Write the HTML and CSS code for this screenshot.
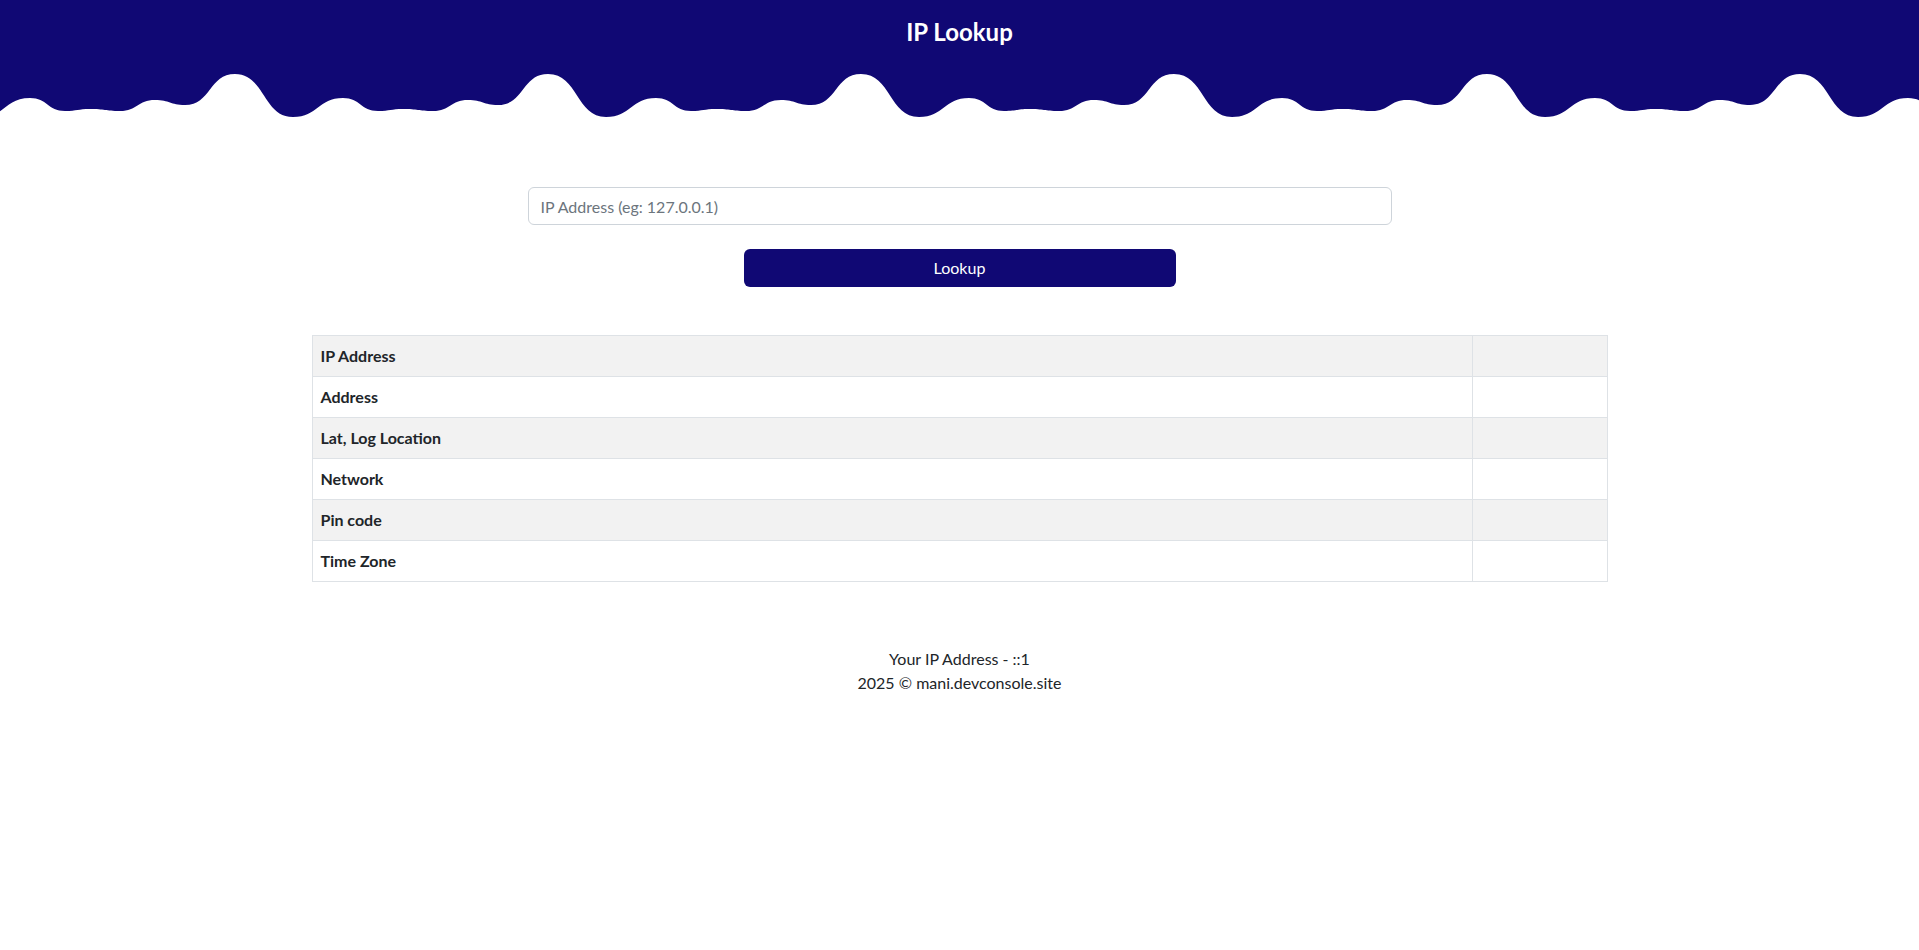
FILE: index.html
```html
<!DOCTYPE html>
<html lang="en">
<head>
<meta charset="utf-8">
<title>IP Lookup</title>
<link rel="stylesheet" href="styles.css">
</head>
<body>
<header class="site-header">
  <div class="header-bar">
    <h1 class="title">IP Lookup</h1>
  </div>
  <svg class="wave" width="100%" height="60" xmlns="http://www.w3.org/2000/svg" aria-hidden="true">
    <path fill="#100874" d="M-20,57 c25,0 25,-19 50,-19 c17.5,0 17.5,13 35,13 c12.5,0 12.5,-2 25,-2 c15,0 15,2 30,2 c17.5,0 17.5,-11 35,-11 c15,0 15,5 30,5 c26,0 24,-31 50,-31 c30,0 28,43 58,43
    c25,0 25,-19 50,-19 c17.5,0 17.5,13 35,13 c12.5,0 12.5,-2 25,-2 c15,0 15,2 30,2 c17.5,0 17.5,-11 35,-11 c15,0 15,5 30,5 c26,0 24,-31 50,-31 c30,0 28,43 58,43
    c25,0 25,-19 50,-19 c17.5,0 17.5,13 35,13 c12.5,0 12.5,-2 25,-2 c15,0 15,2 30,2 c17.5,0 17.5,-11 35,-11 c15,0 15,5 30,5 c26,0 24,-31 50,-31 c30,0 28,43 58,43
    c25,0 25,-19 50,-19 c17.5,0 17.5,13 35,13 c12.5,0 12.5,-2 25,-2 c15,0 15,2 30,2 c17.5,0 17.5,-11 35,-11 c15,0 15,5 30,5 c26,0 24,-31 50,-31 c30,0 28,43 58,43
    c25,0 25,-19 50,-19 c17.5,0 17.5,13 35,13 c12.5,0 12.5,-2 25,-2 c15,0 15,2 30,2 c17.5,0 17.5,-11 35,-11 c15,0 15,5 30,5 c26,0 24,-31 50,-31 c30,0 28,43 58,43
    c25,0 25,-19 50,-19 c17.5,0 17.5,13 35,13 c12.5,0 12.5,-2 25,-2 c15,0 15,2 30,2 c17.5,0 17.5,-11 35,-11 c15,0 15,5 30,5 c26,0 24,-31 50,-31 c30,0 28,43 58,43
    c25,0 25,-19 50,-19 c17.5,0 17.5,13 35,13 c12.5,0 12.5,-2 25,-2 c15,0 15,2 30,2 c17.5,0 17.5,-11 35,-11 c15,0 15,5 30,5 c26,0 24,-31 50,-31 c30,0 28,43 58,43
    V0 H-20 Z"/>
  </svg>
</header>

<main class="content">
  <form class="lookup-form" onsubmit="return false;">
    <input class="ip-input" type="text" placeholder="IP Address (eg: 127.0.0.1)">
    <button class="lookup-btn" type="submit">Lookup</button>
  </form>

  <table class="info-table">
    <tbody>
      <tr><th>IP Address</th><td></td></tr>
      <tr><th>Address</th><td></td></tr>
      <tr><th>Lat, Log Location</th><td></td></tr>
      <tr><th>Network</th><td></td></tr>
      <tr><th>Pin code</th><td></td></tr>
      <tr><th>Time Zone</th><td></td></tr>
    </tbody>
  </table>
</main>

<footer class="site-footer">
  <p>Your IP Address - ::1</p>
  <p>2025 © mani.devconsole.site</p>
</footer>
</body>
</html>
```

FILE: styles.css
```css
* {
  box-sizing: border-box;
}

html, body {
  margin: 0;
  padding: 0;
}

body {
  font-family: "Lato", "Noto Sans", "Liberation Sans", sans-serif;
  font-size: 16px;
  line-height: 24px;
  color: #212529;
  background: #ffffff;
}

.site-header {
  display: block;
}

.header-bar {
  background: #100874;
  height: 60px;
  display: flex;
  justify-content: center;
  padding-top: 16px;
}

.title {
  margin: 0;
  color: #ffffff;
  font-size: 24px;
  font-weight: 700;
  line-height: 32px;
}

.wave {
  display: block;
  height: 60px;
}

.content {
  width: 1296px;
  margin: 0 auto;
  padding-top: 67px;
}

.lookup-form {
  width: 864px;
  margin: 0 auto;
  display: flex;
  flex-direction: column;
  align-items: center;
}

.ip-input {
  width: 864px;
  height: 38px;
  padding: 6px 12px;
  font: inherit;
  color: #212529;
  border: 1px solid #ced4da;
  border-radius: 6px;
  background: #fff;
  outline: none;
}

.ip-input::placeholder {
  color: #6c757d;
}

.lookup-btn {
  margin-top: 24px;
  width: 432px;
  height: 38px;
  font: inherit;
  color: #ffffff;
  background: #100874;
  border: none;
  border-radius: 6px;
  cursor: pointer;
}

.info-table {
  margin-top: 48px;
  width: 1296px;
  border-collapse: collapse;
}

.info-table tr:nth-child(odd) {
  background: #f2f2f2;
}

.info-table th,
.info-table td {
  border: 1px solid #dee2e6;
  height: 41px;
  padding: 8px;
  text-align: left;
}

.info-table th {
  width: 1160px;
  font-weight: 700;
}

.site-footer {
  margin-top: 65px;
  text-align: center;
}

.site-footer p {
  margin: 0;
}
```
